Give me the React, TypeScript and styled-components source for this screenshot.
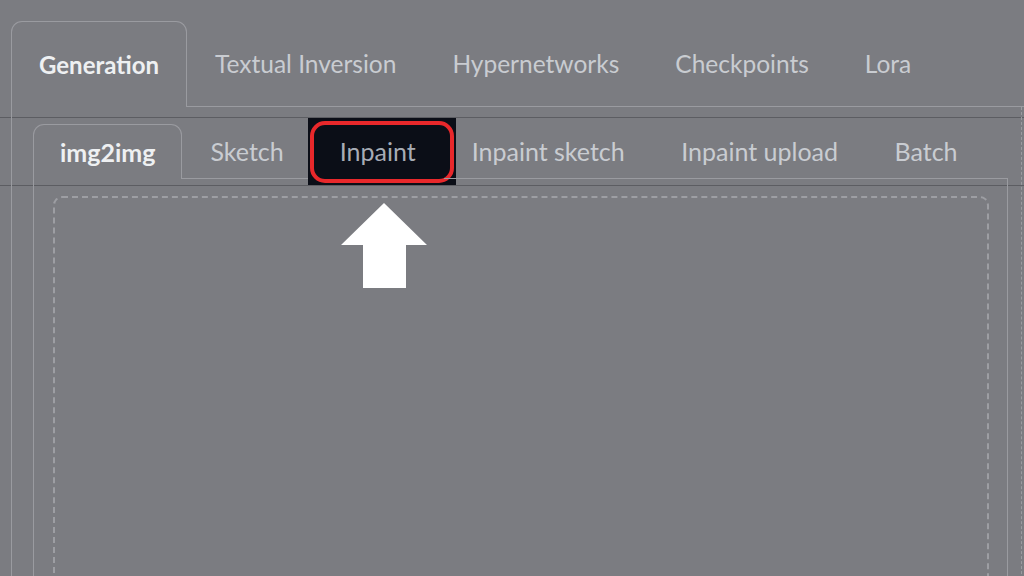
import React from 'react'
import styled, { createGlobalStyle, css } from 'styled-components'

const GlobalStyle = createGlobalStyle`
  html, body {
    margin: 0;
    padding: 0;
    overflow: hidden;
  }

  body {
    background-color: #7b7c81;
    background-image:
      linear-gradient(#5c5d62, #5c5d62),
      linear-gradient(#5c5d62, #5c5d62);
    background-size: 100% 1px;
    background-position: 0 117px, 0 185px;
    background-repeat: no-repeat;
    font-family: Lato, "Open Sans", sans-serif;
  }
`

const Page = styled.div`
  width: 1024px;
  height: 576px;
  padding: 21px 0 0 11px;
  box-sizing: border-box;
  overflow: hidden;
`

const TabRow = styled.div<{ $height: number }>`
  display: flex;
  height: ${p => p.$height}px;
`

const Tab = styled.div<{ $selected?: boolean; $size: number; $pad: number }>`
  position: relative;
  display: flex;
  align-items: center;
  padding: 0 ${p => p.$pad}px;
  font-size: ${p => p.$size}px;
  color: #c9ccd1;
  white-space: nowrap;
  border-bottom: 1px solid #9a9ba0;

  ${p =>
    p.$selected &&
    css`
      color: #eef0f2;
      font-weight: 700;
      border: 1px solid #9a9ba0;
      border-bottom: none;
      border-radius: 11px 11px 0 0;
    `}
`

const Filler = styled.div`
  flex: 1;
  border-bottom: 1px solid #9a9ba0;
`

const Marked = styled(Tab)`
  color: #a7acb5;

  &::before {
    content: '';
    position: absolute;
    left: -4px;
    right: -12px;
    top: -6px;
    bottom: -7px;
    background: #0b0e17;
  }

  &::after {
    content: '';
    position: absolute;
    left: -2px;
    right: -10px;
    top: -3px;
    bottom: -5px;
    border: 4px solid #e8282b;
    border-radius: 15px;
  }
`

const Label = styled.span`
  position: relative;
  z-index: 1;
`

const Arrow = styled.svg`
  position: absolute;
  left: 29px;
  top: 79px;
  z-index: 2;
`

const OuterPanel = styled.div`
  border-left: 1px solid #9a9ba0;
  border-right: 1px dashed #9a9ba0;
  padding: 17px 13px 0 21px;
  margin-right: 2px;
  height: 480px;
`

const InnerPanel = styled.div`
  border-left: 1px solid #9a9ba0;
  border-right: 1px solid #9a9ba0;
  padding: 17px 18px 0 19px;
  height: 420px;
`

const DropZone = styled.div`
  border: 2px dashed #9d9ea3;
  border-radius: 9px;
  height: 480px;
`

const outerTabs = ['Textual Inversion', 'Hypernetworks', 'Checkpoints', 'Lora']

export default function App() {
  return (
    <>
      <GlobalStyle />
      <Page>
        <TabRow $height={86}>
          <Tab $selected $size={24} $pad={27}>Generation</Tab>
          {outerTabs.map(t => (
            <Tab key={t} $size={24.5} $pad={28}>{t}</Tab>
          ))}
          <Filler />
        </TabRow>
        <OuterPanel>
          <TabRow $height={55}>
            <Tab $selected $size={25} $pad={26}>img2img</Tab>
            <Tab $size={25} $pad={28}>Sketch</Tab>
            <Marked $size={25} $pad={28}>
              <Label>Inpaint</Label>
              <Arrow width="86" height="85" viewBox="0 0 86 85">
                <path d="M43 0 L86 42 L65 42 L65 85 L22 85 L22 42 L0 42 Z" fill="#ffffff" />
              </Arrow>
            </Marked>
            <Tab $size={25} $pad={28}>Inpaint sketch</Tab>
            <Tab $size={25} $pad={28.5}>Inpaint upload</Tab>
            <Tab $size={25} $pad={28}>Batch</Tab>
            <Filler />
          </TabRow>
          <InnerPanel>
            <DropZone />
          </InnerPanel>
        </OuterPanel>
      </Page>
    </>
  )
}
